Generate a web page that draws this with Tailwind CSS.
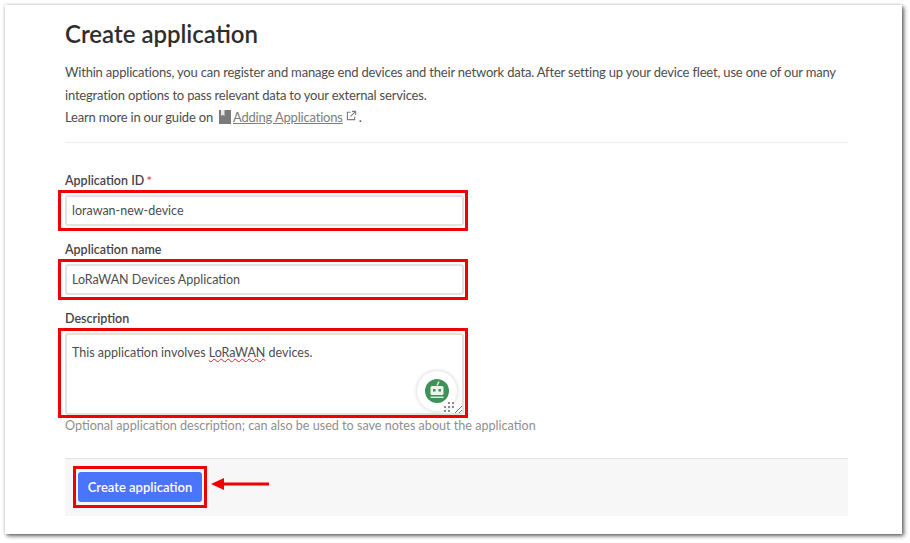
<!DOCTYPE html>
<html lang="en">
<head>
  <meta charset="UTF-8" />
  <title>Create application</title>
  <script src="https://cdn.jsdelivr.net/npm/@tailwindcss/browser@4"></script>
</head>
<body class="bg-white w-[910px] h-[543px] overflow-hidden font-['Lato','Noto_Sans',sans-serif]">

  <!-- Card -->
  <div class="ml-[5px] mt-[5px] w-[897px] h-[529px] bg-white pl-[60px] pr-[54px] shadow-[2px_2px_4px_rgba(0,0,0,0.6),0_0_3px_rgba(0,0,0,0.2)]">

    <h1 class="pt-[13px] text-[24px] leading-[32px] font-semibold text-[#2e2e2e]">Create application</h1>

    <div class="mt-[11px] text-[13px] tracking-[-0.19px] leading-[22.5px] text-[#4d4d4d] pb-[13px] border-b border-[#ececec]">
      <p>Within applications, you can register and manage end devices and their network data. After setting up your device fleet, use one of our many integration options to pass relevant data to your external services.</p>
      <p class="flex items-center">
        Learn more in our guide on
        <svg class="ml-[6px] mr-[2px] shrink-0" width="12" height="14" viewBox="0 0 12 14"><path fill="#7a7a7a" d="M0 0h12v14H0z"/><path fill="#e8e8e8" d="M2 0h3.500v6L3.800 4.800 2 6z"/></svg>
        <a class="underline text-[#7d7d7d]">Adding Applications</a>
        <svg class="ml-[3px] mb-[4px] shrink-0" width="11" height="11" viewBox="0 0 24 24" fill="none" stroke="#7d7d7d" stroke-width="2.400"><path d="M19 14v7H3V5h7M13 3h8v8M21 3 10 14"/></svg>
        <span class="ml-[2px]">.</span>
      </p>
    </div>

    <form class="mt-[28px]">
      <label class="flex pt-[2px] text-[12.500px] leading-[16px] font-semibold text-[#454545]">Application ID<span class="ml-[2px] text-[14px] text-[#e5484d] font-normal">*</span></label>
      <div class="-ml-[7px] w-[410px] h-[41px] border-[3px] border-[#f00000] pl-[4px] pr-[1px] pt-[2px] mt-[1px]">
        <input class="w-full h-[31px] px-[5px] border-2 border-[#e2e2e2] rounded-[3px] text-[12.500px] text-[#4d4d4d] outline-none" value="lorawan-new-device" />
      </div>

      <label class="block mt-[9px] pt-[2px] text-[12.500px] leading-[16px] font-semibold text-[#454545]">Application name</label>
      <div class="-ml-[7px] w-[410px] h-[41px] border-[3px] border-[#f00000] pl-[4px] pr-[1px] pt-[2px] mt-[1px]">
        <input class="w-full h-[31px] px-[5px] border-2 border-[#e2e2e2] rounded-[3px] text-[12.500px] text-[#4d4d4d] outline-none" value="LoRaWAN Devices Application" />
      </div>

      <label class="block mt-[9px] pt-[2px] text-[12.500px] leading-[16px] font-semibold text-[#454545]">Description</label>
      <div class="relative -ml-[7px] w-[410px] h-[90px] border-[3px] border-[#f00000] pl-[4px] pr-[1px] pt-[2px] mt-[1px]">
        <div class="h-[82px] px-[5px] pt-[8px] border-2 border-[#e2e2e2] rounded-[3px] text-[12.500px] leading-[20px] text-[#4d4d4d]">
          This application involves <span class="underline decoration-wavy decoration-[#e02020] decoration-1">LoRaWAN</span> devices.
        </div>
        <!-- Grammar widget over the textarea -->
        <div class="absolute right-[8px] bottom-[4px] w-[40px] h-[40px] rounded-full bg-white shadow-[0_0_4px_rgba(0,0,0,0.2)] flex items-center justify-center">
          <svg width="24" height="24" viewBox="0 0 24 24">
            <circle cx="12" cy="12" r="12" fill="#3f9158"/>
            <path d="M12 6.500 14 2.500" stroke="#d6ecdc" stroke-width="1.500"/>
            <rect x="5.500" y="7" width="13" height="9" rx="1.500" fill="#eaf5ed"/>
            <rect x="8" y="10" width="2.500" height="2.500" fill="#3f9158"/>
            <rect x="13.500" y="10" width="2.500" height="2.500" fill="#3f9158"/>
            <rect x="5.500" y="17.500" width="13" height="1.500" fill="#d6ecdc"/>
          </svg>
        </div>
        <svg class="absolute right-[2px] bottom-[1px]" width="20" height="16" viewBox="0 0 20 16" fill="#8a8a8a">
          <rect x="5" y="4" width="2" height="2"/><rect x="9" y="4" width="2" height="2"/>
          <rect x="1" y="8" width="2" height="2"/><rect x="5" y="8" width="2" height="2"/><rect x="9" y="8" width="2" height="2"/>
          <rect x="1" y="12" width="2" height="2"/><rect x="5" y="12" width="2" height="2"/>
          <path d="M12 15 19 8M16 15l3-3" stroke="#777" fill="none"/>
        </svg>
      </div>
      <p class="-mt-[1px] text-[12.600px] leading-[18px] text-[#8f8f8f]">Optional application description; can also be used to save notes about the application</p>

      <!-- Footer bar -->
      <div class="mt-[23px] h-[58px] bg-[#f7f7f7] border-t border-[#e4e4e4] pl-[8px] pt-[7px] flex items-start">
        <div class="w-[134px] h-[42px] border-[3px] border-[#f00000] pl-[2px] pt-[3px]">
          <button type="button" class="w-[124px] h-[30px] pt-[2px] rounded-[3px] bg-[#4a74fb] text-white text-[13px] font-semibold">Create application</button>
        </div>
        <svg class="ml-[4px] mt-[11px]" width="58" height="14" viewBox="0 0 58 14"><path fill="#f00000" d="M0 7 13 1v4.500h45v3H13V13z"/></svg>
      </div>
    </form>
  </div>
</body>
</html>
